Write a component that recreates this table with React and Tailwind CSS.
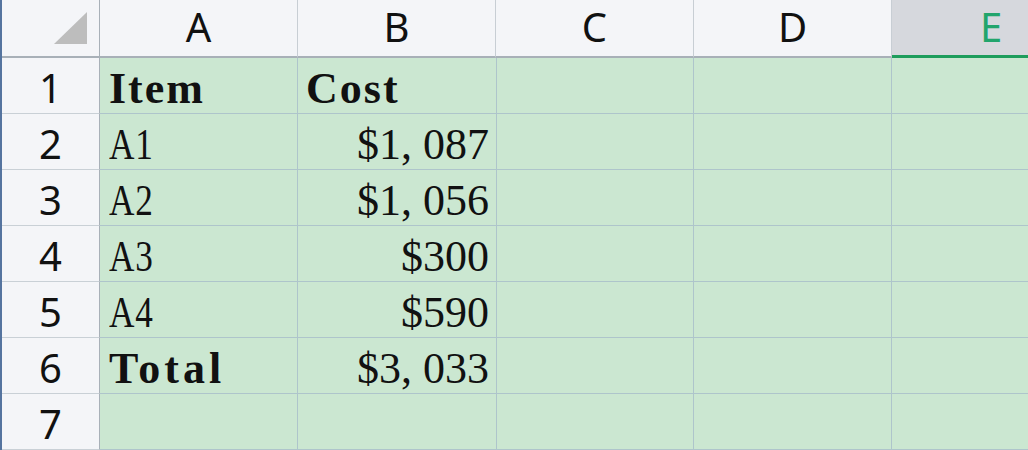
import React from "react";

const cols = ["A", "B", "C", "D", "E"];
const rows = [
  ["Item", "Cost", true],
  ["A1", "$1, 087", false],
  ["A2", "$1, 056", false],
  ["A3", "$300", false],
  ["A4", "$590", false],
  ["Total", "$3, 033", false],
  ["", "", false],
];

const header = "font-['Noto_Sans','Open_Sans',sans-serif] text-[40px] leading-none";
const cellFont = "font-['Liberation_Serif',serif] text-[44px] leading-none text-[#111] whitespace-pre";

function ItemText({ text, bold }) {
  if (bold) {
    return (
      <span className={"font-bold " + (text === "Total" ? "tracking-[4px]" : "tracking-[2px]")}>
        {text}
      </span>
    );
  }
  return (
    <span className="inline-block origin-left scale-x-[0.8] tracking-[1px]">{text}</span>
  );
}

export default function App() {
  return (
    <div className="w-[1028px] h-[450px] overflow-hidden bg-[#cbe7d1] border-l-2 border-[#55749f] flex flex-col">
      <div className="flex h-[58px] shrink-0">
        <div className="w-[98px] shrink-0 bg-[#f4f5f8] border-r border-b-2 border-[#a8b0b8] flex items-start justify-start pl-[52px] pt-[12px]">
          <svg width="33" height="32" viewBox="0 0 33 32">
            <polygon points="33,0 33,32 0,32" fill="#bdbdbd" />
          </svg>
        </div>
        {cols.map((c) => {
          const sel = c === "E";
          return (
            <div
              key={c}
              className={
                "w-[198px] shrink-0 flex items-end justify-center " +
                header +
                (sel
                  ? " bg-[#d6d8dd] text-[#22a56c] border-b-[3px] border-[#1e9d5c] pb-[8px]"
                  : " bg-[#f4f5f8] text-[#111] border-r border-r-[#c8ced4] border-b-2 border-b-[#a8b0b8] pb-[9px]")
              }
            >
              {c}
            </div>
          );
        })}
      </div>
      {rows.map(([a, b, isHeader], r) => {
        const bold = isHeader || a === "Total";
        return (
          <div key={r} className="flex h-[56px] shrink-0">
            <div
              className={
                "w-[98px] shrink-0 bg-[#f4f5f8] border-r border-r-[#a8b0b8] border-b border-b-[#c9d0d6] flex items-end justify-center pb-[5px] text-[#111] " +
                header
              }
            >
              {r + 1}
            </div>
            <div
              className={
                "w-[198px] shrink-0 border-r border-b border-[#aec5cb] flex items-end pb-[2px] pl-[9px] " +
                cellFont
              }
            >
              {a && <ItemText text={a} bold={bold} />}
            </div>
            <div
              className={
                "w-[199px] shrink-0 border-r border-b border-[#aec5cb] flex items-end pb-[2px] " +
                (isHeader ? "justify-start pl-[8px] " : "justify-end pr-[7px] ") +
                cellFont
              }
            >
              {b && (isHeader ? <span className="font-bold tracking-[2px]">{b}</span> : <span>{b}</span>)}
            </div>
            <div className="w-[197px] shrink-0 border-r border-b border-[#aec5cb]" />
            <div className="w-[198px] shrink-0 border-r border-b border-[#aec5cb]" />
            <div className="flex-1 border-b border-[#aec5cb]" />
          </div>
        );
      })}
    </div>
  );
}
